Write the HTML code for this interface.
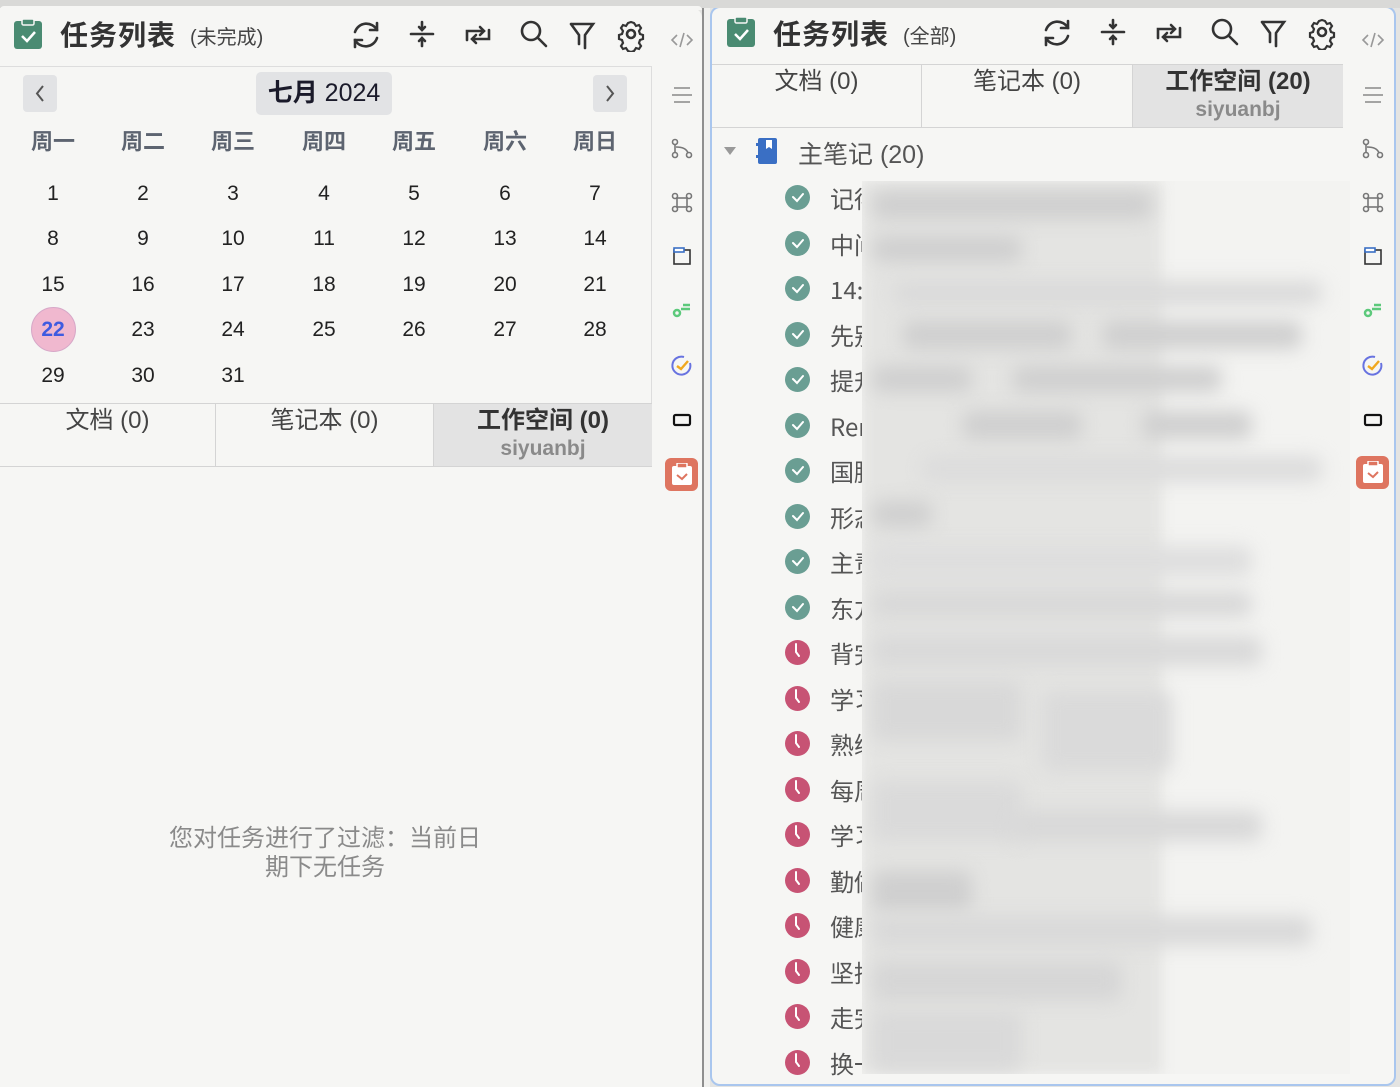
<!DOCTYPE html>
<html><head><meta charset="utf-8">
<style>
*{margin:0;padding:0;box-sizing:border-box}
body{width:1400px;height:1087px;background:#e4e4e2;font-family:"Liberation Sans","Noto Sans CJK SC",sans-serif;position:relative;overflow:hidden;color:#333}
.abs{position:absolute}
.panel{position:absolute;background:#f6f6f4}
.title{position:absolute;font-size:28px;font-weight:bold;color:#333;top:14px;letter-spacing:1px}
.sub{position:absolute;font-size:20px;color:#444;top:21px}
.tab{position:absolute;text-align:center;font-size:24px;color:#444;border-right:1px solid #d4d4d4;line-height:28px;padding-top:3px}
.tab.act{background:#e3e3e3;font-weight:bold;color:#333}
.tab small{display:block;font-size:21px;color:#8a8a8a;font-weight:bold;margin-top:2px;line-height:24px}
.cal{position:absolute;font-size:21px;color:#222;text-align:center;width:60px}
.wk{position:absolute;font-size:22px;font-weight:bold;color:#5d6470;text-align:center;width:60px;top:124px}
.task{position:absolute;left:784px;height:30px;width:200px}
.task .c{position:absolute;left:1px;top:2px;width:25px;height:25px;border-radius:50%}
.task span{position:absolute;left:46px;top:0;font-size:24px;line-height:30px;height:30px;color:#555;font-family:"Noto Sans CJK SC","Liberation Sans",sans-serif}
.blur{filter:blur(9px);position:absolute;background:#cfcfcf;border-radius:10px}
</style></head><body>
<div class="panel" style="left:0;top:8px;width:702px;height:1079px;border-top-right-radius:10px"></div>
<div class="abs" style="left:702px;top:8px;width:2px;height:1079px;background:#8e8e8e"></div>
<div class="abs" style="left:704px;top:0;width:6px;height:1087px;background:#f0f0ee"></div>
<svg class="abs" style="left:14px;top:19px" width="28" height="30" viewBox="0 0 28 30"><rect x="0" y="2" width="28" height="28" rx="3" fill="#4a8b72"/><rect x="8" y="0" width="12" height="6" rx="1.5" fill="#4a8b72" stroke="#f6f6f4" stroke-width="1.5"/><path d="M8 17l5 5 8-9" stroke="#fff" stroke-width="2.5" fill="none"/></svg>
<div class="title" style="left:60px">任务列表</div>
<div class="sub" style="left:190px">(未完成)</div>
<svg class="abs" style="left:350px;top:18px" width="300" height="34" viewBox="0 0 300 34" fill="none" stroke="#333" stroke-width="2.6" stroke-linecap="round">
<path d="M27 12a12 12 0 0 0-22 2M5 22a12 12 0 0 0 22-2"/><path d="M27 5v7h-7M5 29v-7h7"/>
<path d="M61 16h22M72 4v8M69 9l3 3 3-3M72 28v-8M69 23l3-3 3 3"/>
<path d="M117 22v-9h17M130 9l4 4-4 4M139 12v9h-17M126 25l-4-4 4-4"/>
<circle cx="181" cy="13" r="9"/><path d="M188 20l8 8"/>
<path d="M221 6h22l-8 11v13M221 6l8 11v9"/>
<circle cx="281" cy="16" r="4"/><path d="M281 4l3 1 2 3 3-1 2 3-2 3 1 3 3 1v0l0 4-3 1-1 3 2 3-2 3-3-1-2 3-3 1h-0l-3-1-2-3-3 1-2-3 2-3-1-3-3-1v-4l3-1 1-3-2-3 2-3 3 1 2-3z" stroke-width="2.2"/>
</svg>
<div class="abs" style="left:0;top:66px;width:652px;height:338px;border-top:1px solid #ddd;border-right:1px solid #ddd"></div>
<div class="abs" style="left:23px;top:75px;width:34px;height:37px;background:#e2e3e5;border-radius:4px"></div>
<div class="abs" style="left:593px;top:75px;width:34px;height:37px;background:#e2e3e5;border-radius:4px"></div>
<svg class="abs" style="left:23px;top:75px" width="604" height="37" fill="none" stroke="#555" stroke-width="2"><path d="M20 11l-6 7.5 6 7.5M584 11l6 7.5-6 7.5"/></svg>
<div class="abs" style="left:256px;top:72px;width:136px;height:43px;background:#e2e3e5;border-radius:5px;font-size:25px;text-align:center;line-height:43px;color:#1a1a2a"><b>七月</b> 2024</div>
<div class="wk" style="left:23px">周一</div><div class="wk" style="left:113px">周二</div><div class="wk" style="left:203px">周三</div><div class="wk" style="left:294px">周四</div><div class="wk" style="left:384px">周五</div><div class="wk" style="left:475px">周六</div><div class="wk" style="left:565px">周日</div>
<div class="abs" style="left:31px;top:307px;width:45px;height:45px;border-radius:50%;background:#f0b8cf;border:1px solid #d7a8c8"></div>
<div class="abs" style="left:0;top:403px;width:652px;height:64px;border-top:1px solid #d4d4d4;border-bottom:1px solid #d4d4d4"></div>
<div class="tab" style="left:0;top:404px;width:216px;height:62px">文档 (0)</div>
<div class="tab" style="left:216px;top:404px;width:218px;height:62px">笔记本 (0)</div>
<div class="tab act" style="left:434px;top:404px;width:218px;height:62px;border-right:none">工作空间 (0)<small>siyuanbj</small></div>
<div class="abs" style="left:150px;top:824px;width:350px;text-align:center;font-size:24px;color:#8a8a8a;line-height:29px">您对任务进行了过滤：当前日<br>期下无任务</div>

<div class="panel" style="left:710px;top:6px;width:686px;height:1080px;border:2px solid #a9c6ee;border-radius:10px"></div>
<svg class="abs" style="left:727px;top:17px" width="28" height="30" viewBox="0 0 28 30"><rect x="0" y="2" width="28" height="28" rx="3" fill="#4a8b72"/><rect x="8" y="0" width="12" height="6" rx="1.5" fill="#4a8b72" stroke="#f6f6f4" stroke-width="1.5"/><path d="M8 17l5 5 8-9" stroke="#fff" stroke-width="2.5" fill="none"/></svg>
<div class="title" style="left:773px;top:13px">任务列表</div>
<div class="sub" style="left:903px;top:20px">(全部)</div>
<svg class="abs" style="left:1041px;top:16px" width="300" height="34" viewBox="0 0 300 34" fill="none" stroke="#333" stroke-width="2.6" stroke-linecap="round">
<path d="M27 12a12 12 0 0 0-22 2M5 22a12 12 0 0 0 22-2"/><path d="M27 5v7h-7M5 29v-7h7"/>
<path d="M61 16h22M72 4v8M69 9l3 3 3-3M72 28v-8M69 23l3-3 3 3"/>
<path d="M117 22v-9h17M130 9l4 4-4 4M139 12v9h-17M126 25l-4-4 4-4"/>
<circle cx="181" cy="13" r="9"/><path d="M188 20l8 8"/>
<path d="M221 6h22l-8 11v13M221 6l8 11v9"/>
<circle cx="281" cy="16" r="4"/><path d="M281 4l3 1 2 3 3-1 2 3-2 3 1 3 3 1v0l0 4-3 1-1 3 2 3-2 3-3-1-2 3-3 1h-0l-3-1-2-3-3 1-2-3 2-3-1-3-3-1v-4l3-1 1-3-2-3 2-3 3 1 2-3z" stroke-width="2.2"/>
</svg>
<div class="abs" style="left:712px;top:64px;width:631px;height:64px;border-top:1px solid #d4d4d4;border-bottom:1px solid #d4d4d4"></div>
<div class="tab" style="left:712px;top:65px;width:210px;height:62px">文档 (0)</div>
<div class="tab" style="left:922px;top:65px;width:211px;height:62px">笔记本 (0)</div>
<div class="tab act" style="left:1133px;top:65px;width:210px;height:62px;border-right:none">工作空间 (20)<small>siyuanbj</small></div>
<div class="abs" style="left:724px;top:147px;width:0;height:0;border-left:6px solid transparent;border-right:6px solid transparent;border-top:8px solid #999"></div>
<svg class="abs" style="left:756px;top:138px" width="22" height="26" viewBox="0 0 22 26"><rect x="2" y="0" width="19" height="26" rx="2" fill="#3a6fc4"/><rect x="0" y="5" width="5" height="3" fill="#3a6fc4"/><rect x="0" y="17" width="5" height="3" fill="#3a6fc4"/><path d="M10 2v9l3-2 3 2V2" fill="#fff"/></svg>
<div class="abs" style="left:798px;top:135px;font-size:25px;color:#555">主笔记 (20)</div>

<div class="cal" style="left:23px;top:182px">1</div><div class="cal" style="left:113px;top:182px">2</div><div class="cal" style="left:203px;top:182px">3</div><div class="cal" style="left:294px;top:182px">4</div><div class="cal" style="left:384px;top:182px">5</div><div class="cal" style="left:475px;top:182px">6</div><div class="cal" style="left:565px;top:182px">7</div>
<div class="cal" style="left:23px;top:227px">8</div><div class="cal" style="left:113px;top:227px">9</div><div class="cal" style="left:203px;top:227px">10</div><div class="cal" style="left:294px;top:227px">11</div><div class="cal" style="left:384px;top:227px">12</div><div class="cal" style="left:475px;top:227px">13</div><div class="cal" style="left:565px;top:227px">14</div>
<div class="cal" style="left:23px;top:273px">15</div><div class="cal" style="left:113px;top:273px">16</div><div class="cal" style="left:203px;top:273px">17</div><div class="cal" style="left:294px;top:273px">18</div><div class="cal" style="left:384px;top:273px">19</div><div class="cal" style="left:475px;top:273px">20</div><div class="cal" style="left:565px;top:273px">21</div>
<div class="cal" style="left:23px;top:318px;color:#3f5be0;font-weight:bold">22</div><div class="cal" style="left:113px;top:318px">23</div><div class="cal" style="left:203px;top:318px">24</div><div class="cal" style="left:294px;top:318px">25</div><div class="cal" style="left:384px;top:318px">26</div><div class="cal" style="left:475px;top:318px">27</div><div class="cal" style="left:565px;top:318px">28</div>
<div class="cal" style="left:23px;top:364px">29</div><div class="cal" style="left:113px;top:364px">30</div><div class="cal" style="left:203px;top:364px">31</div>

<div class="task" style="top:183px"><div class="c" style="background:#6a9e93"></div><span>记得</span></div>
<div class="task" style="top:229px"><div class="c" style="background:#6a9e93"></div><span>中间</span></div>
<div class="task" style="top:274px"><div class="c" style="background:#6a9e93"></div><span>14:</span></div>
<div class="task" style="top:320px"><div class="c" style="background:#6a9e93"></div><span>先别</span></div>
<div class="task" style="top:365px"><div class="c" style="background:#6a9e93"></div><span>提升</span></div>
<div class="task" style="top:411px"><div class="c" style="background:#6a9e93"></div><span>Rer</span></div>
<div class="task" style="top:456px"><div class="c" style="background:#6a9e93"></div><span>国腾</span></div>
<div class="task" style="top:502px"><div class="c" style="background:#6a9e93"></div><span>形态</span></div>
<div class="task" style="top:547px"><div class="c" style="background:#6a9e93"></div><span>主责</span></div>
<div class="task" style="top:593px"><div class="c" style="background:#6a9e93"></div><span>东方</span></div>
<div class="task" style="top:638px"><div class="c" style="background:#c75374"></div><span>背完</span></div>
<div class="task" style="top:684px"><div class="c" style="background:#c75374"></div><span>学习</span></div>
<div class="task" style="top:729px"><div class="c" style="background:#c75374"></div><span>熟练</span></div>
<div class="task" style="top:775px"><div class="c" style="background:#c75374"></div><span>每周</span></div>
<div class="task" style="top:820px"><div class="c" style="background:#c75374"></div><span>学习</span></div>
<div class="task" style="top:866px"><div class="c" style="background:#c75374"></div><span>勤做</span></div>
<div class="task" style="top:911px"><div class="c" style="background:#c75374"></div><span>健康</span></div>
<div class="task" style="top:957px"><div class="c" style="background:#c75374"></div><span>坚持</span></div>
<div class="task" style="top:1002px"><div class="c" style="background:#c75374"></div><span>走完</span></div>
<div class="task" style="top:1048px"><div class="c" style="background:#c75374"></div><span>换一</span></div>
<svg class="abs" style="left:785px;top:0" width="26" height="1087">
<g stroke="#fff" stroke-width="2" fill="none" stroke-linecap="round">
<path d="M8 197l4 4 6-7M8 243l4 4 6-7M8 288l4 4 6-7M8 334l4 4 6-7M8 379l4 4 6-7M8 425l4 4 6-7M8 470l4 4 6-7M8 516l4 4 6-7M8 561l4 4 6-7M8 607l4 4 6-7"/>
<path d="M11 644v8l3 4M11 690v8l3 4M11 735v8l3 4M11 781v8l3 4M11 826v8l3 4M11 872v8l3 4M11 917v8l3 4M11 963v8l3 4M11 1008v8l3 4M11 1054v8l3 4"/>
</g></svg>

<div class="abs" style="left:862px;top:181px;width:488px;height:893px;overflow:hidden;background:#f3f3f1">
 <div class="abs" style="left:0;top:0;width:300px;height:893px;background:#e4e4e2;filter:blur(6px)"></div>
 <div class="blur" style="left:10px;top:10px;width:280px;height:28px"></div>
 <div class="blur" style="left:10px;top:55px;width:150px;height:26px"></div>
 <div class="blur" style="left:30px;top:100px;width:430px;height:24px;background:#dadada"></div>
 <div class="blur" style="left:40px;top:140px;width:170px;height:28px"></div>
 <div class="blur" style="left:240px;top:140px;width:200px;height:28px"></div>
 <div class="blur" style="left:10px;top:185px;width:100px;height:26px"></div>
 <div class="blur" style="left:150px;top:185px;width:210px;height:26px"></div>
 <div class="blur" style="left:100px;top:230px;width:120px;height:28px"></div>
 <div class="blur" style="left:280px;top:230px;width:110px;height:28px"></div>
 <div class="blur" style="left:60px;top:275px;width:400px;height:26px;background:#dcdcdc"></div>
 <div class="blur" style="left:10px;top:320px;width:60px;height:26px"></div>
 <div class="blur" style="left:10px;top:365px;width:380px;height:30px;background:#dedede"></div>
 <div class="blur" style="left:10px;top:410px;width:380px;height:26px;background:#d8d8d8"></div>
 <div class="blur" style="left:10px;top:455px;width:390px;height:30px;background:#d9d9d9"></div>
 <div class="blur" style="left:10px;top:500px;width:150px;height:60px;background:#d8d8d8"></div>
 <div class="blur" style="left:180px;top:510px;width:130px;height:80px;background:#dadada"></div>
 <div class="blur" style="left:10px;top:600px;width:150px;height:60px;background:#dadada"></div>
 <div class="blur" style="left:150px;top:630px;width:250px;height:30px;background:#d8d8d8"></div>
 <div class="blur" style="left:10px;top:690px;width:100px;height:40px"></div>
 <div class="blur" style="left:10px;top:735px;width:440px;height:30px;background:#d9d9d9"></div>
 <div class="blur" style="left:10px;top:780px;width:250px;height:40px;background:#d6d6d6"></div>
 <div class="blur" style="left:10px;top:830px;width:150px;height:60px;background:#d9d9d9"></div>
</div>

<svg class="abs" style="left:664px;top:22px" width="36" height="470" viewBox="0 0 36 470" fill="none" stroke="#777" stroke-width="1.6">
<path d="M13 13l-5 5 5 5M23 13l5 5-5 5M20 11l-4 14" stroke="#999"/>
<path d="M10 66h16M8 73h20M10 80h16" stroke="#888"/>
<circle cx="11" cy="120" r="2.5"/><circle cx="11" cy="133" r="2.5"/><circle cx="25" cy="133" r="2.5"/><path d="M11 122v8M12 125q10 0 12 6"/>
<circle cx="11" cy="174" r="2.5"/><circle cx="25" cy="174" r="2.5"/><circle cx="11" cy="187" r="2.5"/><circle cx="25" cy="187" r="2.5"/><rect x="13" y="176" width="10" height="9"/>
<rect x="10" y="228" width="16" height="14" stroke="#333"/><rect x="10" y="226" width="10" height="4" fill="#fff" stroke="#3a6fc4"/>
<circle cx="13" cy="291" r="3" stroke="#5cc97b" stroke-width="2.5"/><path d="M17 287h9M19 283h7" stroke="#5cc97b" stroke-width="2.5"/>
<path d="M26 341a9 9 0 1 1-6-6" stroke="#6873e0" stroke-width="2"/><path d="M13 344l4 3 7-8" stroke="#f0a820" stroke-width="2.4"/>
<rect x="10" y="393" width="16" height="10" rx="1.5" stroke="#111" stroke-width="2.2"/>
</svg>
<div class="abs" style="left:665px;top:458px;width:33px;height:33px;background:#de7560;border-radius:6px"></div>
<svg class="abs" style="left:672px;top:463px" width="20" height="22" viewBox="0 0 20 22"><rect x="0" y="3" width="20" height="19" rx="2" fill="#fff"/><rect x="5" y="0" width="10" height="5" rx="1" fill="#de7560" stroke="#fff" stroke-width="1.5"/><path d="M5 12l5 4 5-5" stroke="#de7560" stroke-width="2" fill="none"/></svg>

<svg class="abs" style="left:1355px;top:22px" width="36" height="470" viewBox="0 0 36 470" fill="none" stroke="#777" stroke-width="1.6">
<path d="M13 13l-5 5 5 5M23 13l5 5-5 5M20 11l-4 14" stroke="#999"/>
<path d="M10 66h16M8 73h20M10 80h16" stroke="#888"/>
<circle cx="11" cy="120" r="2.5"/><circle cx="11" cy="133" r="2.5"/><circle cx="25" cy="133" r="2.5"/><path d="M11 122v8M12 125q10 0 12 6"/>
<circle cx="11" cy="174" r="2.5"/><circle cx="25" cy="174" r="2.5"/><circle cx="11" cy="187" r="2.5"/><circle cx="25" cy="187" r="2.5"/><rect x="13" y="176" width="10" height="9"/>
<rect x="10" y="228" width="16" height="14" stroke="#333"/><rect x="10" y="226" width="10" height="4" fill="#fff" stroke="#3a6fc4"/>
<circle cx="13" cy="291" r="3" stroke="#5cc97b" stroke-width="2.5"/><path d="M17 287h9M19 283h7" stroke="#5cc97b" stroke-width="2.5"/>
<path d="M26 341a9 9 0 1 1-6-6" stroke="#6873e0" stroke-width="2"/><path d="M13 344l4 3 7-8" stroke="#f0a820" stroke-width="2.4"/>
<rect x="10" y="393" width="16" height="10" rx="1.5" stroke="#111" stroke-width="2.2"/>
</svg>
<div class="abs" style="left:1356px;top:456px;width:33px;height:33px;background:#de7560;border-radius:6px"></div>
<svg class="abs" style="left:1363px;top:461px" width="20" height="22" viewBox="0 0 20 22"><rect x="0" y="3" width="20" height="19" rx="2" fill="#fff"/><rect x="5" y="0" width="10" height="5" rx="1" fill="#de7560" stroke="#fff" stroke-width="1.5"/><path d="M5 12l5 4 5-5" stroke="#de7560" stroke-width="2" fill="none"/></svg>

<div class="abs" style="left:0;top:0;width:1400px;height:8px;background:#d9d9d7"></div>
<div class="abs" style="left:0;top:6px;width:702px;height:4px;background:#f6f6f4;border-radius:10px 10px 0 0"></div>
</body></html>
